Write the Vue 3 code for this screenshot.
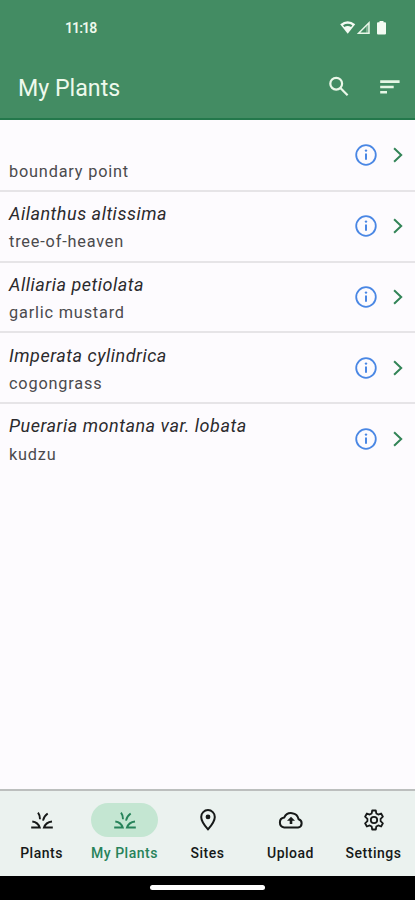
<script setup>
import { ref } from 'vue';

const plants = [
    { id: 1, scientific: '', common: 'boundary point' },
    { id: 2, scientific: 'Ailanthus altissima', common: 'tree-of-heaven' },
    { id: 3, scientific: 'Alliaria petiolata', common: 'garlic mustard' },
    { id: 4, scientific: 'Imperata cylindrica', common: 'cogongrass' },
    { id: 5, scientific: 'Pueraria montana var. lobata', common: 'kudzu' }
];

const tabs = [
    { id: 'plants', label: 'Plants', icon: 'grass' },
    { id: 'mine', label: 'My Plants', icon: 'grass' },
    { id: 'sites', label: 'Sites', icon: 'pin' },
    { id: 'upload', label: 'Upload', icon: 'cloud' },
    { id: 'settings', label: 'Settings', icon: 'gear' }
];

const activeTab = ref('mine');
</script>

<template>
<div class="screen">
    <header class="header">
        <div class="status-bar">
            <span class="clock">11:18</span>
            <svg class="status-icons" width="48" height="16" viewBox="0 0 48 16">
                <path d="M0.2 4.2Q7.7 -1.8 15.2 4.2L7.7 13.8Z" fill="#f4fbf3" />
                <path d="M3 5.3Q7.7 2.4 12.4 5.3L11.1 6.9Q7.7 5 4.3 6.9Z" fill="#438c63" />
                <path d="M29 2.8V13.2H18.6Z" fill="none" stroke="#e9f6e8" stroke-width="1.5" />
                <path d="M26 6.1L29 2.8V13.2H26Z" fill="#e9f6e8" opacity="0.35" />
                <path d="M39.5 1H43.5V2.2H45A1 1 0 0 1 46 3.2V13.5A1 1 0 0 1 45 14.5H38A1 1 0 0 1 37 13.5V3.2A1 1 0 0 1 38 2.2H39.5Z" fill="#f4fbf3" />
            </svg>
        </div>
        <div class="app-bar">
            <h1>My Plants</h1>
            <button class="bar-btn" aria-label="Search">
                <svg width="22" height="22" viewBox="0 0 22 22" fill="none" stroke="#eaf7e8" stroke-width="2.2">
                    <circle cx="8.2" cy="7.7" r="5.9" />
                    <path d="M12.4 11.9L19.6 19.2" />
                </svg>
            </button>
            <button class="bar-btn" aria-label="Sort">
                <svg width="22" height="22" viewBox="0 0 22 22" fill="#e6f6e5">
                    <path d="M1.2 4.2H20.6V6.9H1.2ZM1.2 9.7H14.7V12.3H1.2ZM1.2 15H8V17.6H1.2Z" />
                </svg>
            </button>
        </div>
    </header>

    <main class="list">
        <div v-for="plant in plants" :key="plant.id" class="row">
            <div class="names">
                <div class="scientific">{{ plant.scientific }}</div>
                <div class="common">{{ plant.common }}</div>
            </div>
            <svg class="info" width="22" height="22" viewBox="0 0 22 22">
                <circle cx="11" cy="11" r="9.8" fill="none" stroke="#4a87e4" stroke-width="1.8" />
                <path d="M11 9.5V15.7" stroke="#4a87e4" stroke-width="2" />
                <circle cx="11" cy="6.6" r="1.2" fill="#4a87e4" />
            </svg>
            <svg class="chevron" width="10" height="16" viewBox="0 0 10 16">
                <path d="M1.1 1.2L8.2 8L1.1 14.8" fill="none" stroke="#328457" stroke-width="2" />
            </svg>
        </div>
    </main>

    <nav class="tabs">
        <button
            v-for="tab in tabs"
            :key="tab.id"
            class="tab"
            :class="{ active: tab.id === activeTab }"
            @click="activeTab = tab.id"
        >
            <span class="pill">
                <svg v-if="tab.icon === 'grass'" width="24" height="24" viewBox="0 0 24 24" fill="none" stroke="currentColor">
                    <path d="M2.3 13.5Q8 14.2 9.7 19.6H1.2" stroke-width="2" />
                    <path d="M22 13.5Q15.8 14.2 14 19.6H22.8" stroke-width="2" />
                    <path d="M8 4.6Q10.1 7.3 10 11.2" stroke-width="1.9" />
                    <path d="M17.7 5.6Q14 8.3 13 12.6" stroke-width="1.9" />
                </svg>
                <svg v-else-if="tab.icon === 'pin'" width="24" height="24" viewBox="0 0 24 24">
                    <path d="M12 21.3C8 16.8 5.2 12.8 5.2 8.9A6.8 6.8 0 0 1 18.8 8.9C18.8 12.8 16 16.8 12 21.3Z" fill="none" stroke="currentColor" stroke-width="2" />
                    <circle cx="12" cy="8.9" r="2.4" fill="currentColor" />
                </svg>
                <svg v-else-if="tab.icon === 'cloud'" width="26" height="24" viewBox="0 0 26 24">
                    <path d="M6.2 19.5H20A4.2 4.2 0 0 0 20.6 11.3A7.6 7.6 0 0 0 6.2 9.6A5 5 0 0 0 6.2 19.5Z" fill="none" stroke="currentColor" stroke-width="2" stroke-linejoin="round" />
                    <path d="M13 8.7L17 12.8H14.3V15.9H11.7V12.8H9Z" fill="currentColor" />
                </svg>
                <svg v-else width="24" height="24" viewBox="0 0 24 24" fill="none" stroke="currentColor" stroke-width="1.8" stroke-linejoin="round">
                    <path d="M10.2 2.5H13.8L14.3 5.4L16.3 6.6L19.1 5.5L20.9 8.7L18.6 10.8V13.2L20.9 15.3L19.1 18.5L16.3 17.4L14.3 18.6L13.8 21.5H10.2L9.7 18.6L7.7 17.4L4.9 18.5L3.1 15.3L5.4 13.2V10.8L3.1 8.7L4.9 5.5L7.7 6.6L9.7 5.4Z" />
                    <circle cx="12" cy="12" r="3.2" />
                </svg>
            </span>
            <span class="label">{{ tab.label }}</span>
        </button>
    </nav>

    <div class="gesture-bar">
        <div class="handle"></div>
    </div>
</div>
</template>

<style>
body {
    margin: 0;
}
</style>

<style scoped>
.screen {
    display: flex;
    flex-direction: column;
    width: 415px;
    height: 900px;
    overflow: hidden;
    background: #fdfbfe;
    font-family: Roboto, "Liberation Sans", sans-serif;
}

.header {
    box-sizing: border-box;
    height: 120px;
    background: #438c63;
    border-bottom: 2px solid #23784b;
    color: #eef9ec;
}

.status-bar {
    display: flex;
    align-items: center;
    justify-content: space-between;
    height: 56px;
    padding: 0 27px 0 65px;
}

.clock {
    font-size: 14px;
    font-weight: 600;
    letter-spacing: -0.9px;
}

.status-icons {
    display: block;
}

.app-bar {
    display: flex;
    align-items: center;
    gap: 29px;
    height: 62px;
    padding: 0 14px 0 18px;
}

h1 {
    flex: 1;
    margin: 2px 0 0;
    font-size: 23.2px;
    font-weight: 400;
    line-height: 28px;
}

button {
    padding: 0;
    border: none;
    background: none;
    font-family: inherit;
    cursor: pointer;
}

.bar-btn svg {
    display: block;
}

.list {
    flex: 1;
    padding-top: 1px;
}

.row {
    display: flex;
    align-items: center;
    box-sizing: border-box;
    height: 70.8px;
    padding: 0 12px 0 9px;
    border-bottom: 2px solid #e6e4e7;
}

.row:last-child {
    border-bottom-color: transparent;
}

.names {
    flex: 1;
    padding-top: 4px;
}

.scientific {
    height: 28.5px;
    font-size: 18px;
    font-style: italic;
    line-height: 28px;
    letter-spacing: 0.52px;
    color: #2b2a2d;
}

.common {
    height: 28px;
    font-size: 16.3px;
    line-height: 28px;
    letter-spacing: 0.82px;
    color: #4b4a4d;
}

.chevron {
    margin-left: 16px;
}

.tabs {
    display: flex;
    box-sizing: border-box;
    height: 87px;
    border-top: 2px solid #bcbfbe;
    background: #ebf2ef;
}

.tab {
    display: flex;
    flex: 1;
    flex-direction: column;
    align-items: center;
    padding-top: 12px;
    color: #161918;
}

.pill {
    display: flex;
    align-items: center;
    justify-content: center;
    width: 67px;
    height: 34px;
    border-radius: 17px;
}

.label {
    margin-top: 6px;
    font-size: 14px;
    font-weight: 500;
    line-height: 20px;
    letter-spacing: 0.5px;
    white-space: nowrap;
}

.active {
    color: #27835a;
}

.active .pill {
    background: #c4e6d2;
}

.gesture-bar {
    display: flex;
    justify-content: center;
    height: 24px;
    background: #000;
}

.handle {
    width: 115px;
    height: 5px;
    margin-top: 9px;
    border-radius: 3px;
    background: #fff;
}
</style>
